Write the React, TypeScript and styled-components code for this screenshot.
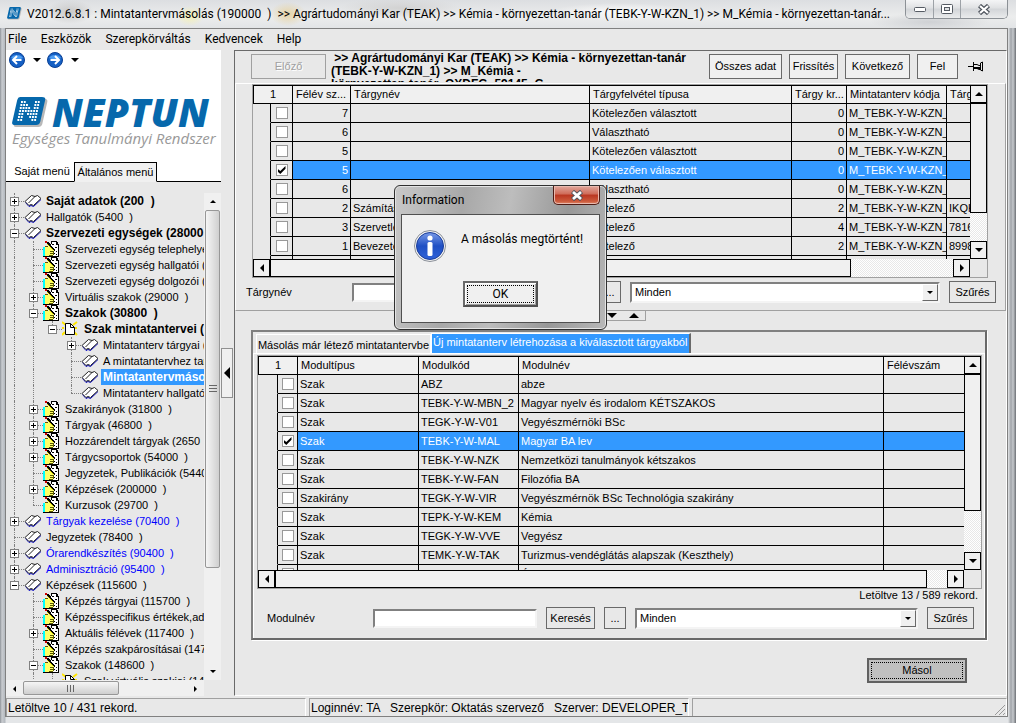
import React from "react";
import styled, { createGlobalStyle, css } from "styled-components";

const ui = `"Liberation Sans", Arial, sans-serif`;
const segoe = `Roboto, "Open Sans", sans-serif`;
const brand = `"Open Sans", "Noto Sans", sans-serif`;
const face = "#e8e8e8";
const light = "#f0f0f0";
const accent = "#3399ff";

const Global = createGlobalStyle`
  * { box-sizing: border-box; }
  body { margin: 0; background: ${face}; color: #000; font: 11px/13px ${ui}; }
  button, input, select { font: inherit; color: inherit; margin: 0; padding: 0; border-radius: 0; }
  svg { display: block; flex: none; }
`;

/* ---------- window frame ---------- */
const Window = styled.div`
  position: relative;
  display: flex;
  flex-direction: column;
  height: 100vh;
  min-height: 700px;
  padding: 0 8px 6px 5px;
  overflow: hidden;
  background: linear-gradient(90deg, #8e9399 0, #c9ccd0 2px, #b4b9bf 5px, #e4e6e8 6px, #e4e6e8 calc(100% - 8px), #9fa3a8 calc(100% - 5px), #c6c9cd calc(100% - 3px), #6d7176 100%);
`;
const TitleBar = styled.header`
  display: flex;
  align-items: flex-start;
  height: 28px;
  margin: 0 -8px 0 -5px;
  padding: 0 8px 0 5px;
  background:
    radial-gradient(ellipse 24px 12px at 70px 12px, #c8c8c8, transparent),
    radial-gradient(ellipse 14px 10px at 190px 16px, #f3f0b4, transparent),
    radial-gradient(ellipse 18px 12px at 288px 14px, #e6d3a4, transparent),
    radial-gradient(ellipse 60px 10px at 400px 8px, #d2d2d2, transparent),
    radial-gradient(ellipse 70px 9px at 620px 12px, #fafafa, transparent),
    radial-gradient(ellipse 60px 9px at 930px 22px, #cfd1d4, transparent),
    linear-gradient(#dcdee1, #eceded 60%, #e2e4e6);
`;
const TitleIcon = styled.span`
  padding: 7px 5px 0 2px;
`;
const TitleText = styled.h1`
  flex: 1;
  min-width: 0;
  margin: 0;
  padding-top: 5px;
  overflow: hidden;
  white-space: pre;
  font: 12px/18px ${segoe};
`;
const Caption = styled.div`
  display: flex;
  height: 19px;
  border: 1px solid #8c9196;
  border-top: 0;
  border-radius: 0 0 5px 5px;
  overflow: hidden;
`;
const CaptionButton = styled.button<{ $w: number }>`
  display: grid;
  place-items: center;
  width: ${(p) => p.$w}px;
  border: 0;
  border-left: 1px solid #9da2a7;
  background: linear-gradient(#f4f5f6, #dfe1e3 45%, #d2d5d8 50%, #eaebec);
  &:first-child { border-left: 0; }
`;
const Client = styled.div`
  display: flex;
  flex: 1;
  flex-direction: column;
  min-height: 0;
  border: 1px solid #808080;
  background: ${face};
`;
const MenuBar = styled.nav`
  display: flex;
  gap: 14px;
  height: 21px;
  padding: 0 2px;
  font: 12px/20px ${segoe};
`;
const MenuItem = styled.a`
  color: #000;
  text-decoration: none;
`;
const Work = styled.div`
  display: flex;
  flex: 1;
  min-height: 0;
`;

/* ---------- left pane ---------- */
const Side = styled.aside`
  display: flex;
  flex-direction: column;
  flex: none;
  width: 215px;
`;
const Brand = styled.div`
  height: 112px;
  background: #fff;
`;
const NavButtons = styled.div`
  display: flex;
  align-items: center;
  padding: 2px 3px 0;
`;
const NavButton = styled.button`
  display: flex;
  align-items: center;
  gap: 8px;
  width: 38px;
  height: 16px;
  border: 0;
  background: none;
`;
const LogoRow = styled.div`
  display: flex;
  align-items: center;
  gap: 4px;
  margin-top: 26px;
  padding-left: 6px;
`;
const LogoText = styled.strong`
  color: #0668ac;
  font: italic 800 39px/36px ${brand};
`;
const LogoSub = styled.div`
  padding-left: 6px;
  color: #999;
  font: italic 15px/16px ${brand};
  white-space: nowrap;
`;
const SideTabs = styled.div`
  display: flex;
  align-items: flex-end;
  height: 20px;
  background: #fff;
`;
const SideTab = styled.button<{ $on?: boolean }>`
  height: 20px;
  border: 0;
  border-bottom: 1px solid #000;
  background: none;
  width: 68px;
  padding-left: 4px;
  white-space: nowrap;
  ${(p) =>
    p.$on &&
    css`
      width: 83px;
      padding: 0;
      border: 1px solid #000;
      border-bottom-color: ${light};
      background: ${light};
    `}
`;
const SideTabFill = styled.div`
  flex: 1;
  height: 20px;
  border-bottom: 1px solid #000;
`;
const TreeArea = styled.div`
  display: grid;
  grid-template: minmax(0, 1fr) 16px / minmax(0, 1fr) 17px;
  flex: 1;
  min-height: 0;
  padding-top: 11px;
`;
const Tree = styled.ul`
  margin: 0 0 0 -1px;
  padding: 0;
  overflow: hidden;
  list-style: none;
`;
const TreeRow = styled.li`
  display: flex;
  align-items: center;
  height: 16px;
  white-space: pre;
`;
const Guide = styled.span<{ $line: "none" | "full" | "half"; $stub?: boolean }>`
  position: relative;
  flex: none;
  width: 19px;
  height: 16px;
  &::before {
    content: "";
    position: absolute;
    left: 9px;
    top: 0;
    height: ${(p) => (p.$line === "half" ? 8 : 16)}px;
    border-left: 1px dotted #808080;
    display: ${(p) => (p.$line === "none" ? "none" : "block")};
  }
  &::after {
    content: "";
    position: absolute;
    left: 9px;
    right: 0;
    top: 8px;
    border-top: 1px dotted #808080;
    display: ${(p) => (p.$stub ? "block" : "none")};
  }
`;
const Expander = styled.button`
  position: absolute;
  z-index: 1;
  left: 5px;
  top: 4px;
  display: grid;
  place-items: center;
  width: 9px;
  height: 9px;
  border: 1px solid #808080;
  background: #fff;
`;
const TreeLabel = styled.span<{ $bold?: boolean; $blue?: boolean; $sel?: boolean }>`
  flex: 1;
  margin-left: 1px;
  padding-left: 2px;
  line-height: 16px;
  color: ${(p) => (p.$sel ? "#fff" : p.$blue ? "#0000ff" : "#000")};
  background: ${(p) => (p.$sel ? accent : "none")};
  ${(p) => p.$bold && `font: bold 12px/16px ${ui};`}
`;
const AeroBar = styled.div<{ $h?: boolean }>`
  display: flex;
  flex-direction: ${(p) => (p.$h ? "row" : "column")};
  background: ${light};
`;
const AeroArrow = styled.button`
  display: grid;
  place-items: center;
  flex: none;
  width: 17px;
  height: 17px;
  border: 0;
  background: none;
`;
const AeroThumb = styled.div<{ $h?: boolean }>`
  display: grid;
  place-items: center;
  border: 1px solid #979797;
  border-radius: 2px;
  ${(p) =>
    p.$h
      ? "width: 96px; margin: 1px 0; background: linear-gradient(#f5f5f5, #e2e2e2 50%, #cfcfcf);"
      : "height: 79%; margin: 0 1px; background: linear-gradient(90deg, #f5f5f5, #e2e2e2 50%, #cfcfcf);"}
`;
const CollapseRail = styled.div`
  display: flex;
  flex: none;
  align-items: center;
  width: 13px;
`;
const CollapseButton = styled.button`
  display: grid;
  place-items: center;
  width: 12px;
  height: 50px;
  border: 1px solid #909090;
  background: ${light};
`;

/* ---------- main pane ---------- */
const Main = styled.main`
  flex: 1;
  min-width: 0;
  border: 1px solid;
  border-color: #696969 #fff #fff #696969;
`;
const Toolbar = styled.div`
  display: flex;
  align-items: flex-start;
  gap: 7px;
  height: 32px;
  padding: 3px 20px 0 16px;
  overflow: hidden;
`;
const Crumb = styled.p`
  flex: 1;
  min-width: 0;
  max-height: 30px;
  margin: -2px 8px 0 -2px;
  overflow: hidden;
  font: bold 12px/13px ${ui};
  white-space: pre;
`;
const FlatButton = styled.button<{ $w: number; $tall?: boolean }>`
  flex: none;
  width: ${(p) => p.$w}px;
  height: ${(p) => (p.$tall ? 25 : 22)}px;
  border: 1px solid #696969;
  background: ${(p) => (p.$tall ? light : face)};
  white-space: nowrap;
  &:disabled {
    border-color: #a0a0a0;
    background: ${face};
    color: #a0a0a0;
    text-shadow: 1px 1px 0 #fff;
  }
`;
const PinButton = styled.button`
  width: 18px;
  height: 25px;
  margin-left: 3px;
  border: 0;
  background: none;
`;
const Upper = styled.section`
  border: 1px solid #fff;
  border-right-color: #a0a0a0;
  border-bottom-color: #a0a0a0;
  padding-bottom: 7px;
`;
const GridBox = styled.div<{ $body: number }>`
  display: grid;
  grid-template: ${(p) => p.$body}px 18px / minmax(0, 1fr) 17px;
  border: 1px solid #a0a0a0;
`;
const UpperGrid = styled(GridBox)`
  margin: 0 17px 0 16px;
`;
const Viewport = styled.div`
  overflow: hidden;
`;
const Table = styled.table`
  width: 100%;
  table-layout: fixed;
  border-collapse: separate;
  border-spacing: 0;
`;
const Th = styled.th`
  height: 19px;
  padding: 0 3px;
  overflow: hidden;
  border: solid #000;
  border-width: 1px 1px 1px 0;
  background: ${light};
  text-align: left;
  font-weight: 400;
  white-space: nowrap;
  &:first-child {
    border-left-width: 1px;
    text-align: center;
  }
  &:last-child { border-right-width: 0; }
`;
const Td = styled.td<{ $num?: boolean; $sel?: boolean }>`
  height: 19px;
  padding: 0 2px;
  overflow: hidden;
  border: solid #000;
  border-width: 0 1px 1px 0;
  background: ${(p) => (p.$sel ? accent : "transparent")};
  color: ${(p) => (p.$sel ? "#fff" : "#000")};
  text-align: ${(p) => (p.$num ? "right" : "left")};
  white-space: nowrap;
  &:first-child { border-bottom-color: transparent; }
  &:last-child { border-right-width: 0; }
`;
const Check = styled.input`
  display: block;
  appearance: none;
  width: 12px;
  height: 12px;
  margin: 0 auto;
  border: 1px solid #999;
  background: #fff;
  &:checked::before {
    content: "";
    display: block;
    width: 8px;
    height: 8px;
    margin: 1px;
    background: #000;
    clip-path: polygon(0 35%, 35% 62%, 100% 0, 100% 35%, 35% 100%, 0 70%);
  }
`;
const BarV = styled.div`
  display: flex;
  flex-direction: column;
  grid-area: 1 / 2;
  background: repeating-conic-gradient(#fff 0 25%, #e8e8e8 0 50%) 0 0 / 2px 2px;
`;
const BarH = styled.div`
  display: flex;
  grid-area: 2 / 1;
  background: repeating-conic-gradient(#fff 0 25%, #e8e8e8 0 50%) 0 0 / 2px 2px;
`;
const BarButton = styled.button`
  display: grid;
  place-items: center;
  flex: none;
  width: 17px;
  height: 18px;
  border: 1px solid #000;
  background: ${light};
`;
const BarThumb = styled.div<{ $size: number }>`
  flex: 0 0 ${(p) => p.$size}%;
  border: 1px solid #000;
  background: ${light};
`;
const Track = styled.div`
  display: flex;
  flex: 1;
  flex-direction: inherit;
`;
const FilterBar = styled.form`
  display: flex;
  align-items: center;
  gap: 9px;
`;
const UpperFilter = styled(FilterBar)`
  padding: 3px 9px 0 10px;
`;
const FieldLabel = styled.label`
  flex: none;
  width: 97px;
`;
const TextBox = styled.input<{ $w: number }>`
  flex: none;
  width: ${(p) => p.$w}px;
  height: 19px;
  border: 2px solid;
  border-color: #808080 #f4f4f4 #f4f4f4 #808080;
  background: #fff;
  padding: 0 2px;
`;
const SelectWrap = styled.div`
  position: relative;
  flex: 1;
  height: 21px;
`;
const Select = styled.select`
  appearance: none;
  width: 100%;
  height: 21px;
  padding: 0 20px 0 3px;
  border: 2px solid;
  border-color: #808080 #f4f4f4 #f4f4f4 #808080;
  background: #fff;
`;
const SelectArrow = styled.span`
  position: absolute;
  top: 2px;
  right: 2px;
  display: grid;
  place-items: center;
  width: 16px;
  height: 17px;
  border: 1px solid;
  border-color: #fff #696969 #696969 #fff;
  background: ${light};
  pointer-events: none;
`;
const Splitter = styled.div`
  display: flex;
  justify-content: center;
`;
const SplitHandle = styled.div`
  display: flex;
  align-items: center;
  justify-content: flex-end;
  gap: 12px;
  width: 50px;
  height: 10px;
  padding: 0 6px;
  border: 1px solid #a0a0a0;
  border-top: 0;
`;
const Lower = styled.section`
  margin: 9px 19px 0 16px;
  border: 2px solid;
  border-color: #808080 #696969 #696969 #808080;
  box-shadow: 1px 1px 0 #fff;
`;
const Tabs = styled.div`
  display: flex;
  align-items: flex-end;
  height: 21px;
  padding-left: 3px;
`;
const Tab = styled.button<{ $on?: boolean }>`
  width: 175px;
  height: 19px;
  border: 1px solid #fff;
  border-bottom: 0;
  background: ${face};
  padding: 3px 0 0;
  white-space: nowrap;
  ${(p) =>
    p.$on &&
    css`
      width: 260px;
      height: 20px;
      padding: 0 0 2px 1px;
      border-right: 2px solid #696969;
      background: ${accent};
      color: #fff;
      text-align: left;
    `}
`;
const TabPage = styled.div`
  border: solid #fff;
  border-width: 1px 1px 0 1px;
  padding: 1px 2px 9px 3px;
`;
const Loaded = styled.p`
  margin: 0;
  padding: 0 4px 6px;
  line-height: 12px;
  text-align: right;
`;
const LowerFilter = styled(FilterBar)`
  padding: 0 8px 0 10px;
`;
const Actions = styled.div`
  display: flex;
  justify-content: flex-end;
  padding: 18px 39px 0;
`;
const PrimaryButton = styled.button`
  width: 100px;
  height: 25px;
  border: 2px solid #606060;
  background: #c0c0c0;
  outline: 1px dotted #000;
  outline-offset: -5px;
`;

/* ---------- status bar ---------- */
const Status = styled.footer`
  display: flex;
  flex: none;
  gap: 3px;
  height: 20px;
  padding-top: 2px;
  font: 12px/18px ${ui};
`;
const Segment = styled.div<{ $w?: number }>`
  flex: ${(p) => (p.$w ? "none" : 1)};
  width: ${(p) => (p.$w ? p.$w + "px" : "auto")};
  border: 1px solid #a0a0a0;
  border-right-color: #fff;
  border-bottom: 0;
  padding-left: 1px;
  overflow: hidden;
  white-space: pre;
  display: flex;
`;
const Grip = styled.span`
  margin-left: auto;
  align-self: flex-end;
`;

/* ---------- message dialog ---------- */
const Dialog = styled.div`
  position: absolute;
  left: 394px;
  top: 185px;
  display: flex;
  flex-direction: column;
  width: 213px;
  height: 145px;
  padding: 0 6px 6px;
  border: 1px solid #303030;
  border-radius: 6px;
  box-shadow: inset 0 0 0 1px #e4e4e4;
  background: linear-gradient(100deg, #c9c9c9, #a8a8a8 30%, #bdbdbd 50%, #989898 75%, #b8b8b8);
`;
const DialogHead = styled.div`
  display: flex;
  justify-content: space-between;
  height: 28px;
`;
const DialogTitle = styled.h2`
  margin: 0;
  padding: 5px 1px 0;
  font: 12px/18px ${segoe};
`;
const CloseButton = styled.button`
  display: grid;
  place-items: center;
  width: 47px;
  height: 19px;
  border: 1px solid #4e1b14;
  border-top: 0;
  border-radius: 0 0 5px 5px;
  background: linear-gradient(#e0a79c, #cf6b58 45%, #b93621 50%, #cc5a3c 85%, #e08a6a);
  box-shadow: inset 0 0 0 1px #e9b9ae;
`;
const DialogBody = styled.div`
  display: flex;
  flex: 1;
  flex-direction: column;
  align-items: center;
  justify-content: space-between;
  padding: 15px 12px 15px;
  border: 1px solid #505050;
  background: ${light};
`;
const Message = styled.div`
  display: flex;
  gap: 15px;
  width: 100%;
  font: 12px/18px ${segoe};
  white-space: nowrap;
`;
const OkButton = styled.button`
  width: 75px;
  height: 26px;
  border: 2px solid;
  border-color: #696969 #505050 #505050 #696969;
  background: ${light};
  box-shadow: inset 1px 1px 0 #fff, inset -1px -1px 0 #a0a0a0;
  outline: 1px dotted #000;
  outline-offset: -5px;
  font: 12px/18px ${segoe};
`;

/* ---------- drawings ---------- */
const Tri = ({ d, s = 4 }: { d: "u" | "d" | "l" | "r"; s?: number }) => {
  const w = s * 2;
  const pts = {
    u: `0,${s} ${s},0 ${w},${s}`,
    d: `0,0 ${w},0 ${s},${s}`,
    l: `${s},0 0,${s} ${s},${w}`,
    r: `0,0 ${s},${s} 0,${w}`,
  }[d];
  const v = d === "u" || d === "d";
  return (
    <svg width={v ? w : s} height={v ? s : w}>
      <polygon points={pts} />
    </svg>
  );
};
const LogoMark = ({ size }: { size: number }) => (
  <svg width={size} height={size * 0.86} viewBox="0 0 36 31">
    <path d="M8 2h25q3 0 2.300 3l-5 22q-.8 3-4 3H4q-3 0-2-3z" fill="#b8b8b8" />
    <path d="M8 0h22q4 0 3.200 3l-5 22q-.8 3-4 3H3q-3.500 0-2.800-3l5-22Q6 0 8 0z" fill="#0668ac" />
    {[0, 1, 2, 3, 4, 5, 6].map((r) =>
      [0, 1, 2, 3, 4, 5, 6].map((c) =>
        c < 2 || c > 4 || Math.abs(c - r) < 2 ? (
          <rect key={`${r}${c}`} x={9 + c * 2.8 - r * 0.6} y={4 + r * 3} width="1.900" height="2" fill="#fff" />
        ) : null,
      ),
    )}
  </svg>
);
const Round = ({ back }: { back?: boolean }) => (
  <svg width="16" height="16" viewBox="0 0 16 16">
    <circle cx="8" cy="8" r="7.500" fill="#1560c4" stroke="#0a3f94" />
    <path d="M2 6a6.500 5 0 0 1 12 0q-6 3-12 0z" fill="#4c9bf0" />
    <path
      d={back ? "M12.500 8H4M8 4 4 8l4 4" : "M3.500 8H12M8 4l4 4-4 4"}
      stroke="#fff"
      strokeWidth="2"
      fill="none"
    />
  </svg>
);
const BookIcon = () => (
  <svg width="19" height="16" viewBox="0 0 19 16">
    <path d="M1.500 9.500 5 13.500 7 12.500 9.500 13.500 17 6.500" fill="none" stroke="#0000c0" />
    <path d="M1 8.500 7.500 2.500 11 3.500 13.500 2.500 17 5.500 9.500 12.500 7 11.500 5 12.500z" fill="#fff" stroke="#222" />
    <path d="M11 3.500 4.500 10" fill="none" stroke="#222" />
  </svg>
);
const HandIcon = () => (
  <svg width="19" height="16" viewBox="0 0 19 16" shapeRendering="crispEdges">
    <path d="M8.500.5h5l2 3v12h-9V9z" fill="#fff" stroke="#000" />
    <path d="M13.500 1v2.500h2M9 3.500h2M12 6.500h2M11 9.500h1M13 10.500h1M11 12.500h1M13 13.500h1" fill="none" stroke="#000" />
    <path d="M2 6h5l4 3v4l-3 2H2z" fill="#ffff66" />
    <path d="M2 5.500h3M6 14.500h4M10.500 10v4M7 10.500h3M7 12.500h3" stroke="#5a5a00" />
    <rect x="0" y="6" width="2" height="9" fill="#00ffff" />
    <path d="M0 15.500h7" stroke="#000" />
    <path d="M4 1l7 8" stroke="#000" strokeWidth="2" />
    <path d="M4 3l6 6" stroke="#f0e800" />
    <rect x="2" y="0" width="2" height="2" fill="#d00000" />
  </svg>
);
const NewIcon = () => (
  <svg width="19" height="16" viewBox="0 0 19 16">
    <path d="M0 1l4 3M15 1l-4 3M0 14l3-3M15 14l-3-3M0 7h2M13 7h2" stroke="#ffe600" strokeWidth="2" />
    <path d="M3.500 2.500h5l4 4v7h-9z" fill="#fff" stroke="#000" />
    <path d="M8.500 2.500v4h4" fill="none" stroke="#000" />
  </svg>
);
const InfoIcon = () => (
  <svg width="32" height="32" viewBox="0 0 32 32">
    <defs>
      <linearGradient id="info" x1="0" y1="0" x2="0" y2="1">
        <stop offset="0" stopColor="#7a9be8" />
        <stop offset=".5" stopColor="#1f4fc4" />
        <stop offset="1" stopColor="#2f62d8" />
      </linearGradient>
    </defs>
    <circle cx="16" cy="16" r="15.500" fill="#f4f4f4" stroke="#8a8f98" />
    <circle cx="16" cy="16" r="13.500" fill="url(#info)" stroke="#1a3d9a" />
    <circle cx="16" cy="8" r="2.600" fill="#fff" />
    <rect x="13.500" y="12" width="5" height="14" rx="1.500" fill="#fff" />
  </svg>
);
const Cross = ({ light: l }: { light?: boolean }) => (
  <svg width="14" height="11" viewBox="0 0 14 11">
    <path d="M2.500 1.500 11.500 9.500M11.500 1.500 2.500 9.500" stroke="#4d535c" strokeWidth="4.500" />
    <path d="M3 2 11 9M11 2 3 9" stroke="#fff" strokeWidth={l ? 2.8 : 2.2} />
  </svg>
);
const PinIcon = () => (
  <svg width="16" height="11" viewBox="0 0 16 11">
    <path d="M0 5.500h5M5.500 1v9M6 3.500h3l2 1h2M6 7.500h3l2 1h2M12.500 2 14.500 1v9l-2-1z" fill="none" stroke="#000" />
    <rect x="6" y="6" width="7" height="2" fill="#000" />
  </svg>
);

/* ---------- data ---------- */
type Kind = "book" | "hand" | "new";
type Node = {
  g: string; // guides of the ancestors, then this row's own: f full, h half, n none
  box?: "+" | "-";
  k: Kind;
  t: string;
  bold?: boolean;
  blue?: boolean;
  sel?: boolean;
};
const nodes: Node[] = [
  { g: "f", box: "+", k: "book", t: "Saját adatok (200  )", bold: true },
  { g: "f", box: "+", k: "book", t: "Hallgatók (5400  )" },
  { g: "f", box: "-", k: "book", t: "Szervezeti egységek (28000", bold: true },
  { g: "ff", k: "hand", t: "Szervezeti egység telephelyei" },
  { g: "ff", k: "hand", t: "Szervezeti egység hallgatói (2" },
  { g: "ff", k: "hand", t: "Szervezeti egység dolgozói (2" },
  { g: "ff", box: "+", k: "hand", t: "Virtuális szakok (29000  )" },
  { g: "ff", box: "-", k: "hand", t: "Szakok (30800  )", bold: true },
  { g: "ffh", box: "-", k: "new", t: "Szak mintatantervei (", bold: true },
  { g: "ffnf", box: "+", k: "book", t: "Mintatanterv tárgyai (3" },
  { g: "ffnf", k: "book", t: "A mintatantervhez tart" },
  { g: "ffnf", k: "book", t: "Mintatantervmásol", bold: true, sel: true },
  { g: "ffnh", k: "book", t: "Mintatanterv hallgatói" },
  { g: "ff", box: "+", k: "hand", t: "Szakirányok (31800  )" },
  { g: "ff", box: "+", k: "hand", t: "Tárgyak (46800  )" },
  { g: "ff", box: "+", k: "hand", t: "Hozzárendelt tárgyak (2650  )" },
  { g: "ff", box: "+", k: "hand", t: "Tárgycsoportok (54000  )" },
  { g: "ff", k: "hand", t: "Jegyzetek, Publikációk (5440" },
  { g: "ff", box: "+", k: "hand", t: "Képzések (200000  )" },
  { g: "fh", k: "hand", t: "Kurzusok (29700  )" },
  { g: "f", box: "+", k: "book", t: "Tárgyak kezelése (70400  )", blue: true },
  { g: "f", k: "book", t: "Jegyzetek (78400  )" },
  { g: "f", box: "+", k: "book", t: "Órarendkészítés (90400  )", blue: true },
  { g: "f", box: "+", k: "book", t: "Adminisztráció (95400  )", blue: true },
  { g: "h", box: "-", k: "book", t: "Képzések (115600  )" },
  { g: "nf", k: "hand", t: "Képzés tárgyai (115700  )" },
  { g: "nf", k: "hand", t: "Képzésspecifikus értékek,ada" },
  { g: "nf", box: "+", k: "hand", t: "Aktuális félévek (117400  )" },
  { g: "nf", k: "hand", t: "Képzés szakpárosításai (1471" },
  { g: "nf", box: "-", k: "hand", t: "Szakok (148600  )" },
  { g: "nff", k: "new", t: "Szak virtuális szakjai (148" },
];
const code = "M_TEBK-Y-W-KZN_";
const subjects = [
  ["7", "", "Kötelezően választott", "0", ""],
  ["6", "", "Választható", "0", ""],
  ["5", "", "Kötelezően választott", "0", ""],
  ["5", "", "Kötelezően választott", "0", ""],
  ["6", "", "Választható", "0", ""],
  ["2", "Számítás", "Kötelező", "2", "IKQK"],
  ["3", "Szervetle", "Kötelező", "4", "7816"],
  ["1", "Bevezete", "Kötelező", "2", "8998"],
  ["", "", "", "", ""],
];
const modules = [
  ["Szak", "ABZ", "abze"],
  ["Szak", "TEBK-Y-W-MBN_2", "Magyar nyelv és irodalom KÉTSZAKOS"],
  ["Szak", "TEGK-Y-W-V01", "Vegyészmérnöki BSc"],
  ["Szak", "TEBK-Y-W-MAL", "Magyar BA lev"],
  ["Szak", "TEBK-Y-W-NZK", "Nemzetközi tanulmányok kétszakos"],
  ["Szak", "TEBK-Y-W-FAN", "Filozófia BA"],
  ["Szakirány", "TEGK-Y-W-VIR", "Vegyészmérnök BSc Technológia szakirány"],
  ["Szak", "TEPK-Y-W-KEM", "Kémia"],
  ["Szak", "TEGK-Y-W-VVE", "Vegyész"],
  ["Szak", "TEMK-Y-W-TAK", "Turizmus-vendéglátás alapszak (Keszthely)"],
  ["Szakirány", "SSA", "Óvodapedagógus"],
];

const guide = { f: "full", h: "half", n: "none" } as const;

function TreeItem({ n }: { n: Node }) {
  const own = n.g.length - 1;
  return (
    <TreeRow>
      {n.g.split("").map((c, i) => (
        <Guide key={i} $line={guide[c as "f"]} $stub={i === own}>
          {i === own && n.box && (
            <Expander aria-label={n.box === "+" ? "Kinyitás" : "Becsukás"}>
              <svg width="7" height="7" shapeRendering="crispEdges">
                <path d={n.box === "+" ? "M1 3.500h5M3.500 1v5" : "M1 3.500h5"} stroke="#000" />
              </svg>
            </Expander>
          )}
        </Guide>
      ))}
      {n.k === "book" ? <BookIcon /> : n.k === "hand" ? <HandIcon /> : <NewIcon />}
      <TreeLabel $bold={n.bold} $blue={n.blue} $sel={n.sel}>
        {n.t}
      </TreeLabel>
    </TreeRow>
  );
}

function Bars({ v, h }: { v: number; h: number }) {
  return (
    <>
      <BarH>
        <BarButton aria-label="Balra"><Tri d="l" /></BarButton>
        <Track>
          <BarThumb $size={h} />
        </Track>
        <BarButton aria-label="Jobbra"><Tri d="r" /></BarButton>
      </BarH>
      <BarV>
        <BarButton aria-label="Fel"><Tri d="u" /></BarButton>
        <Track>
          <BarThumb $size={v} />
        </Track>
        <BarButton aria-label="Le"><Tri d="d" /></BarButton>
      </BarV>
    </>
  );
}

function Combo({ label }: { label: string }) {
  return (
    <SelectWrap>
      <Select aria-label={label}>
        <option>Minden</option>
      </Select>
      <SelectArrow><Tri d="d" s={3} /></SelectArrow>
    </SelectWrap>
  );
}

export default function App() {
  return (
    <Window>
      <Global />
      <TitleBar>
        <TitleIcon><LogoMark size={15} /></TitleIcon>
        <TitleText>
          {"V2012.6.8.1 : Mintatantervmásolás (190000  )  >> Agrártudományi Kar (TEAK) >> Kémia - környezettan-tanár (TEBK-Y-W-KZN_1) >> M_Kémia - környezettan-tanár..."}
        </TitleText>
        <Caption>
          <CaptionButton $w={27} aria-label="Kis méret">
            <svg width="12" height="5"><rect x=".5" y=".5" width="11" height="4" rx="1" fill="#fff" stroke="#555b63" /></svg>
          </CaptionButton>
          <CaptionButton $w={27} aria-label="Előző méret">
            <svg width="12" height="10">
              <rect x=".5" y=".5" width="11" height="9" rx="1" fill="#fff" stroke="#555b63" />
              <rect x="3.500" y="3.500" width="5" height="3" fill="#dfe1e3" stroke="#555b63" />
            </svg>
          </CaptionButton>
          <CaptionButton $w={47} aria-label="Bezárás"><Cross /></CaptionButton>
        </Caption>
      </TitleBar>

      <Client>
        <MenuBar>
          {["File", "Eszközök", "Szerepkörváltás", "Kedvencek", "Help"].map((m) => (
            <MenuItem key={m} href="#">{m}</MenuItem>
          ))}
        </MenuBar>
        <Work>
          <Side>
            <Brand>
              <NavButtons>
                <NavButton aria-label="Vissza"><Round back /><Tri d="d" s={4} /></NavButton>
                <NavButton aria-label="Előre"><Round /><Tri d="d" s={4} /></NavButton>
              </NavButtons>
              <LogoRow>
                <LogoMark size={36} />
                <LogoText>NEPTUN</LogoText>
              </LogoRow>
              <LogoSub>Egységes Tanulmányi Rendszer</LogoSub>
            </Brand>
            <SideTabs>
              <SideTab>Saját menü</SideTab>
              <SideTab $on>Általános menü</SideTab>
              <SideTabFill />
            </SideTabs>
            <TreeArea>
              <Tree>
                {nodes.map((n) => <TreeItem key={n.t} n={n} />)}
              </Tree>
              <AeroBar>
                <AeroArrow aria-label="Fel"><Tri d="u" s={3} /></AeroArrow>
                <Track>
                  <AeroThumb>
                    <svg width="8" height="8"><path d="M0 .5h8M0 3.500h8M0 6.500h8" stroke="#666" /></svg>
                  </AeroThumb>
                </Track>
                <AeroArrow aria-label="Le"><Tri d="d" s={3} /></AeroArrow>
              </AeroBar>
              <AeroBar $h>
                <AeroArrow aria-label="Balra"><Tri d="l" s={3} /></AeroArrow>
                <Track>
                  <AeroThumb $h>
                    <svg width="8" height="7"><path d="M.5 0v7M3.500 0v7M6.500 0v7" stroke="#666" /></svg>
                  </AeroThumb>
                </Track>
                <AeroArrow aria-label="Jobbra"><Tri d="r" s={3} /></AeroArrow>
              </AeroBar>
            </TreeArea>
          </Side>
          <CollapseRail>
            <CollapseButton aria-label="Panel elrejtése"><Tri d="l" s={6} /></CollapseButton>
          </CollapseRail>

          <Main>
            <Toolbar>
              <FlatButton $w={75} $tall disabled>Előző</FlatButton>
              <Crumb>
                {" >> Agrártudományi Kar (TEAK) >> Kémia - környezettan-tanár\n(TEBK-Y-W-KZN_1) >> M_Kémia -\nkörnyezettan-tanár_QXDFG_59145_G"}
              </Crumb>
              <FlatButton $w={73} $tall>Összes adat</FlatButton>
              <FlatButton $w={49} $tall>Frissítés</FlatButton>
              <FlatButton $w={65} $tall>Következő</FlatButton>
              <FlatButton $w={41} $tall>Fel</FlatButton>
              <PinButton aria-label="Rögzítés"><PinIcon /></PinButton>
            </Toolbar>

            <Upper>
              <UpperGrid $body={174}>
                <Viewport>
                  <Table>
                    <colgroup>
                      <col width="18" /><col width="22" /><col width="58" /><col />
                      <col width="202" /><col width="55" /><col width="100" /><col width="23" />
                    </colgroup>
                    <thead>
                      <tr>
                        <Th colSpan={2}>1</Th>
                        <Th>Félév sz...</Th>
                        <Th>Tárgynév</Th>
                        <Th>Tárgyfelvétel típusa</Th>
                        <Th>Tárgy kr...</Th>
                        <Th>Mintatanterv kódja</Th>
                        <Th>Tárg</Th>
                      </tr>
                    </thead>
                    <tbody>
                      {subjects.map((r, i) => {
                        const s = i === 3;
                        return (
                          <tr key={i}>
                            <Td />
                            <Td><Check type="checkbox" aria-label={`Tárgy ${i + 1}`} defaultChecked={s} /></Td>
                            <Td $num $sel={s}>{r[0]}</Td>
                            <Td $sel={s}>{r[1]}</Td>
                            <Td $sel={s}>{r[2]}</Td>
                            <Td $num $sel={s}>{r[3]}</Td>
                            <Td $sel={s}>{r[3] && code}</Td>
                            <Td $sel={s}>{r[4]}</Td>
                          </tr>
                        );
                      })}
                    </tbody>
                  </Table>
                </Viewport>
                <Bars v={80} h={85} />
              </UpperGrid>
              <UpperFilter onSubmit={(e) => e.preventDefault()}>
                <FieldLabel htmlFor="subject">Tárgynév</FieldLabel>
                <TextBox id="subject" $w={238} />
                <FlatButton type="button" $w={22}>...</FlatButton>
                <Combo label="Tárgyak szűrése" />
                <FlatButton $w={47}>Szűrés</FlatButton>
              </UpperFilter>
            </Upper>

            <Splitter>
              <SplitHandle>
                <Tri d="d" s={5} />
                <Tri d="u" s={5} />
              </SplitHandle>
            </Splitter>

            <Lower>
              <Tabs>
                <Tab>Másolás már létező mintatantervbe</Tab>
                <Tab $on>Új mintatanterv létrehozása a kiválasztott tárgyakból</Tab>
              </Tabs>
              <TabPage>
                <GridBox $body={214}>
                  <Viewport>
                    <Table>
                      <colgroup>
                        <col width="20" /><col width="20" /><col width="121" />
                        <col width="100" /><col /><col width="80" />
                      </colgroup>
                      <thead>
                        <tr>
                          <Th colSpan={2}>1</Th>
                          <Th>Modultípus</Th>
                          <Th>Modulkód</Th>
                          <Th>Modulnév</Th>
                          <Th>Félévszám</Th>
                        </tr>
                      </thead>
                      <tbody>
                        {modules.map((r, i) => {
                          const s = i === 3;
                          return (
                            <tr key={i}>
                              <Td />
                              <Td><Check type="checkbox" aria-label={`Modul ${i + 1}`} defaultChecked={s} /></Td>
                              <Td $sel={s}>{r[0]}</Td>
                              <Td $sel={s}>{r[1]}</Td>
                              <Td $sel={s}>{r[2]}</Td>
                              <Td $sel={s} />
                            </tr>
                          );
                        })}
                      </tbody>
                    </Table>
                  </Viewport>
                  <Bars v={77} h={97} />
                </GridBox>
                <Loaded>Letöltve 13 / 589 rekord.</Loaded>
                <LowerFilter onSubmit={(e) => e.preventDefault()}>
                  <FieldLabel htmlFor="module">Modulnév</FieldLabel>
                  <TextBox id="module" $w={164} />
                  <FlatButton $w={49}>Keresés</FlatButton>
                  <FlatButton type="button" $w={22}>...</FlatButton>
                  <Combo label="Modulok szűrése" />
                  <FlatButton type="button" $w={47}>Szűrés</FlatButton>
                </LowerFilter>
              </TabPage>
            </Lower>
            <Actions>
              <PrimaryButton>Másol</PrimaryButton>
            </Actions>
          </Main>
        </Work>

        <Status>
          <Segment $w={300}>Letöltve 10 / 431 rekord.</Segment>
          <Segment $w={380}>{"Loginnév: TA   Szerepkör: Oktatás szervező   Szerver: DEVELOPER_T"}</Segment>
          <Segment>
            <Grip>
              <svg width="14" height="14"><path d="M3 13 13 3M7 13l6-6M11 13l2-2" stroke="#999" /></svg>
            </Grip>
          </Segment>
        </Status>
      </Client>

      <Dialog role="dialog" aria-label="Information">
        <DialogHead>
          <DialogTitle>Information</DialogTitle>
          <CloseButton aria-label="Bezárás"><Cross light /></CloseButton>
        </DialogHead>
        <DialogBody>
          <Message>
            <InfoIcon />
            <span>A másolás megtörtént!</span>
          </Message>
          <OkButton>OK</OkButton>
        </DialogBody>
      </Dialog>
    </Window>
  );
}
